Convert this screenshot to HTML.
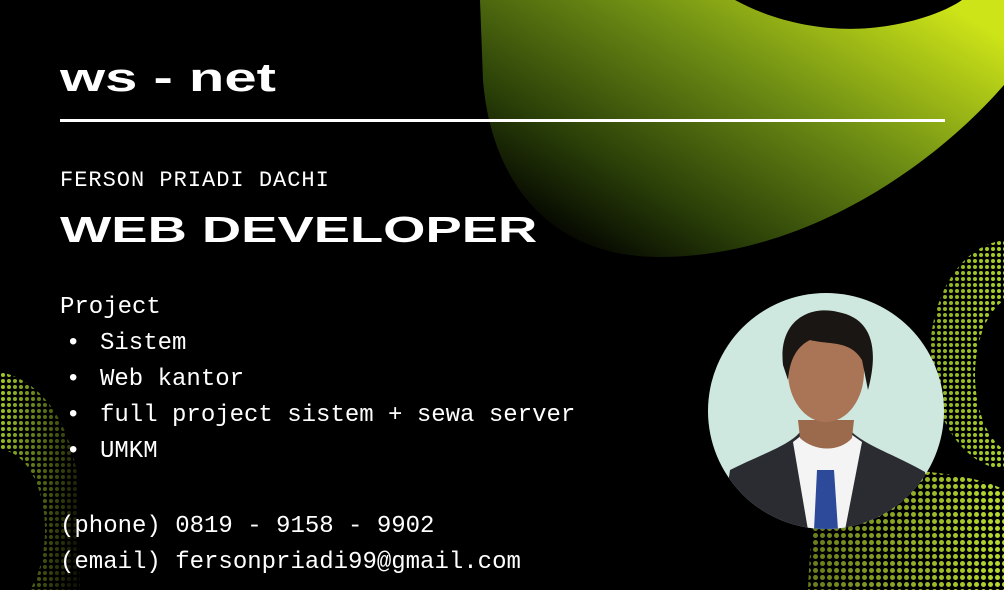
<!DOCTYPE html>
<html><head><meta charset="utf-8"><style>
html,body{margin:0;padding:0;background:#000;}
#c{position:relative;width:1004px;height:590px;overflow:hidden;background:#000;}
.t{position:absolute;color:#fff;white-space:pre;}
.brand{font-family:"Liberation Sans",sans-serif;font-weight:bold;}
.mono{font-family:"Liberation Mono","DejaVu Sans Mono",monospace;font-size:24px;}
</style></head><body><div id="c">
<svg width="1004" height="590" style="position:absolute;left:0;top:0">
<defs>
<linearGradient id="g" x1="0.1" y1="0.9" x2="1" y2="0.15">
<stop offset="0" stop-color="#000"/>
<stop offset="0.25" stop-color="#2a4008"/>
<stop offset="0.6" stop-color="#6c8c14"/>
<stop offset="1" stop-color="#cde418"/>
</linearGradient>
<pattern id="d" width="6" height="6" patternUnits="userSpaceOnUse">
<circle cx="3" cy="3" r="2" fill="#a8d22a"/></pattern>
<pattern id="d2" width="7" height="7" patternUnits="userSpaceOnUse">
<circle cx="3.5" cy="3.5" r="2.5" fill="#b8dc30"/></pattern>
<linearGradient id="fl" x1="0" y1="0" x2="1" y2="0.3">
<stop offset="0" stop-color="#fff" stop-opacity="1"/><stop offset="1" stop-color="#fff" stop-opacity="0.1"/></linearGradient>
<mask id="ml"><rect x="0" y="360" width="90" height="230" fill="url(#fl)"/></mask>
<linearGradient id="fb" x1="0" y1="0" x2="1" y2="0">
<stop offset="0" stop-color="#fff" stop-opacity="0.5"/><stop offset="1" stop-color="#fff" stop-opacity="1"/></linearGradient>
<mask id="mb"><rect x="780" y="240" width="224" height="350" fill="url(#fb)"/></mask>
</defs>
<path d="M480,0 L735,0 C775,22 825,32 870,28 C915,24 948,10 962,0 L1004,0 L1004,85 C930,170 800,257 660,257 C540,257 490,170 483,80 Z" fill="url(#g)"/>
<g mask="url(#ml)">
<path d="M0,372 C40,380 70,420 78,480 L80,590 L0,590 Z" fill="url(#d)"/>
<ellipse cx="0" cy="530" rx="45" ry="80" fill="#000"/>
</g>
<g mask="url(#mb)">
<ellipse cx="1010" cy="355" rx="80" ry="115" fill="url(#d)"/>
<ellipse cx="1020" cy="375" rx="45" ry="80" fill="#000"/>
<path d="M830,470 C900,465 980,475 1004,490 L1004,590 L808,590 C810,540 815,490 830,470 Z" fill="url(#d2)"/>
</g>
<circle cx="826" cy="411" r="118" fill="#cfe8df"/>
<clipPath id="cc"><circle cx="826" cy="411" r="118"/></clipPath>
<g clip-path="url(#cc)">
<path d="M730,470 C760,455 790,445 800,432 L852,432 C865,445 895,455 925,472 L935,540 L720,540 Z" fill="#2a2c31"/>
<path d="M793,442 L808,530 L845,530 L862,442 L848,432 L806,432 Z" fill="#f4f4f4"/>
<path d="M817,470 L834,470 L838,530 L814,530 Z" fill="#2d4a9a"/>
<path d="M798,420 L800,438 C815,452 840,452 852,438 L854,420 Z" fill="#9b6a4c"/>
<ellipse cx="826" cy="372" rx="38" ry="50" fill="#a97556"/>
<path d="M783,365 C778,320 810,305 838,312 C870,318 880,345 868,390 L862,360 C850,340 830,345 810,340 C800,345 790,355 788,380 Z" fill="#1a1614"/>
</g>
</svg>
<div class="t brand" style="left:60px;top:56px;font-size:40px;letter-spacing:0px;transform:scaleX(1.45);transform-origin:left">ws - net</div>
<div style="position:absolute;left:60px;top:119px;width:885px;height:3px;background:#fff"></div>
<div class="t mono" style="left:60px;top:168px;font-size:22px;letter-spacing:1px">FERSON PRIADI DACHI</div>
<div class="t brand" style="left:60px;top:209px;font-size:36px;letter-spacing:0px;transform:scaleX(1.51);transform-origin:left">WEB DEVELOPER</div>
<div class="t mono" style="left:60px;top:294px">Project</div>
<div class="t mono" style="left:66px;top:330px">•</div><div class="t mono" style="left:100px;top:330px">Sistem</div>
<div class="t mono" style="left:66px;top:366px">•</div><div class="t mono" style="left:100px;top:366px">Web kantor</div>
<div class="t mono" style="left:66px;top:402px">•</div><div class="t mono" style="left:100px;top:402px">full project sistem + sewa server</div>
<div class="t mono" style="left:66px;top:438px">•</div><div class="t mono" style="left:100px;top:438px">UMKM</div>
<div class="t mono" style="left:60px;top:513px">(phone) 0819 - 9158 - 9902</div>
<div class="t mono" style="left:60px;top:549px">(email) fersonpriadi99@gmail.com</div>
</div></body></html>
